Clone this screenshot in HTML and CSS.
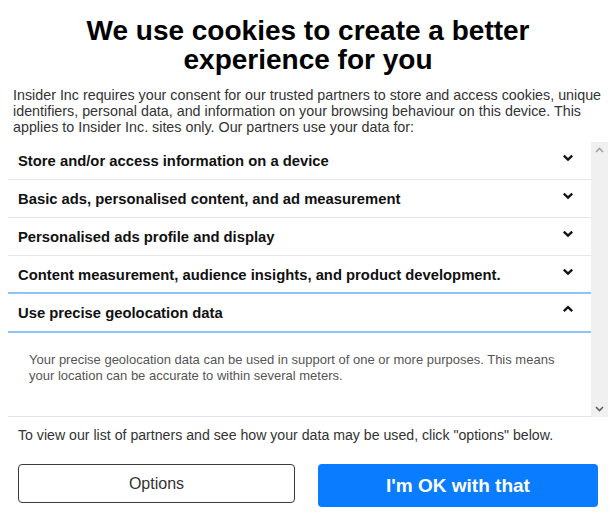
FILE: index.html
```html
<!DOCTYPE html>
<html lang="en">
<head>
<meta charset="utf-8">
<title>Cookie consent</title>
<link rel="stylesheet" href="styles.css">
</head>
<body>
<div class="page">
  <h1 class="title">We use cookies to create a better experience for you</h1>
  <p class="intro">Insider Inc requires your consent for our trusted partners to store and access cookies, unique identifiers, personal data, and information on your browsing behaviour on this device. This applies to Insider Inc. sites only. Our partners use your data for:</p>

  <div class="purposes">
    <div class="purpose-list">
      <div class="purpose">
        <div class="purpose-head"><span>Store and/or access information on a device</span>
          <svg class="chev" width="12" height="8" viewBox="0 0 12 8"><path d="M1.8 1.6 L6 5.6 L10.2 1.6" /></svg></div>
      </div>
      <div class="purpose">
        <div class="purpose-head"><span>Basic ads, personalised content, and ad measurement</span>
          <svg class="chev" width="12" height="8" viewBox="0 0 12 8"><path d="M1.8 1.6 L6 5.6 L10.2 1.6" /></svg></div>
      </div>
      <div class="purpose">
        <div class="purpose-head"><span>Personalised ads profile and display</span>
          <svg class="chev" width="12" height="8" viewBox="0 0 12 8"><path d="M1.8 1.6 L6 5.6 L10.2 1.6" /></svg></div>
      </div>
      <div class="purpose">
        <div class="purpose-head"><span>Content measurement, audience insights, and product development.</span>
          <svg class="chev" width="12" height="8" viewBox="0 0 12 8"><path d="M1.8 1.6 L6 5.6 L10.2 1.6" /></svg></div>
      </div>
      <div class="purpose open">
        <div class="purpose-head"><span>Use precise geolocation data</span>
          <svg class="chev" width="12" height="8" viewBox="0 0 12 8"><path d="M1.8 6.2 L6 2.2 L10.2 6.2" /></svg></div>
        <div class="purpose-body">Your precise geolocation data can be used in support of one or more purposes. This means your location can be accurate to within several meters.</div>
      </div>
    </div>
    <div class="scrollbar">
      <svg class="sb-arrow up" width="9" height="6" viewBox="0 0 9 6"><path d="M1 5 L4.5 1.5 L8 5" /></svg>
      <svg class="sb-arrow down" width="9" height="6" viewBox="0 0 9 6"><path d="M1 1 L4.5 4.5 L8 1" /></svg>
    </div>
  </div>

  <p class="note">To view our list of partners and see how your data may be used, click "options" below.</p>

  <div class="actions">
    <button class="btn btn-options" type="button">Options</button>
    <button class="btn btn-ok" type="button">I'm OK with that</button>
  </div>
</div>
</body>
</html>
```

FILE: styles.css
```css
html, body {
  margin: 0;
  padding: 0;
  background: #fff;
}

.page {
  width: 600px;
  margin-left: 8px;
  font-family: "Liberation Sans", Arial, sans-serif;
  color: #333;
}

.title {
  margin: 16px 0 0;
  padding: 0 60px;
  font-size: 28px;
  line-height: 29px;
  font-weight: bold;
  text-align: center;
  color: #000;
}

.intro {
  margin: 13px 0 0;
  padding-left: 5px;
  font-size: 14.3px;
  line-height: 16px;
  color: #333;
}

.purposes {
  margin-top: 7px;
  height: 275px;
  display: flex;
}

.purpose-list {
  flex: 1;
  overflow: hidden;
  box-sizing: border-box;
  border-bottom: 1px solid #e2e2ea;
}

.purpose-head {
  height: 37px;
  padding: 0 17px 0 10px;
  display: flex;
  align-items: center;
  justify-content: space-between;
  border-bottom: 1px solid #e6e6e6;
  font-size: 14.8px;
  font-weight: bold;
  color: #111;
}

.chev {
  margin-bottom: 6px;
  fill: none;
  stroke: #111;
  stroke-width: 2.3;
}

.purpose.open .purpose-head {
  margin-top: -2px;
  border-top: 2px solid #8cc4f6;
  border-bottom: 2px solid #8cc4f6;
}

.purpose.open .chev {
  margin-bottom: 7px;
}

.purpose-body {
  padding: 19px 21px 38px;
  font-size: 13px;
  line-height: 16px;
  color: #555;
}

.scrollbar {
  width: 17px;
  background: #f0f0f0;
  display: flex;
  flex-direction: column;
  justify-content: space-between;
  align-items: center;
  padding: 5px 0;
  box-sizing: border-box;
}

.sb-arrow {
  fill: none;
  stroke-width: 1.6;
}

.sb-arrow.up {
  stroke: #a3a3a3;
}

.sb-arrow.down {
  stroke: #606060;
}

.note {
  margin: 10px 0 0;
  padding-left: 10px;
  font-size: 14.15px;
  line-height: 16px;
  color: #333;
}

.actions {
  margin-top: 21px;
  padding: 0 10px;
  display: flex;
  justify-content: space-between;
  align-items: flex-start;
}

.btn {
  font-family: "Liberation Sans", Arial, sans-serif;
  border-radius: 4px;
  cursor: pointer;
  padding: 0;
}

.btn-options {
  width: 277px;
  height: 39px;
  border: 1px solid #3a3a3a;
  background: #fff;
  font-size: 16px;
  color: #333;
}

.btn-ok {
  width: 280px;
  height: 43px;
  border: none;
  background: #0a7cff;
  font-size: 19px;
  font-weight: bold;
  color: #fff;
}
```
